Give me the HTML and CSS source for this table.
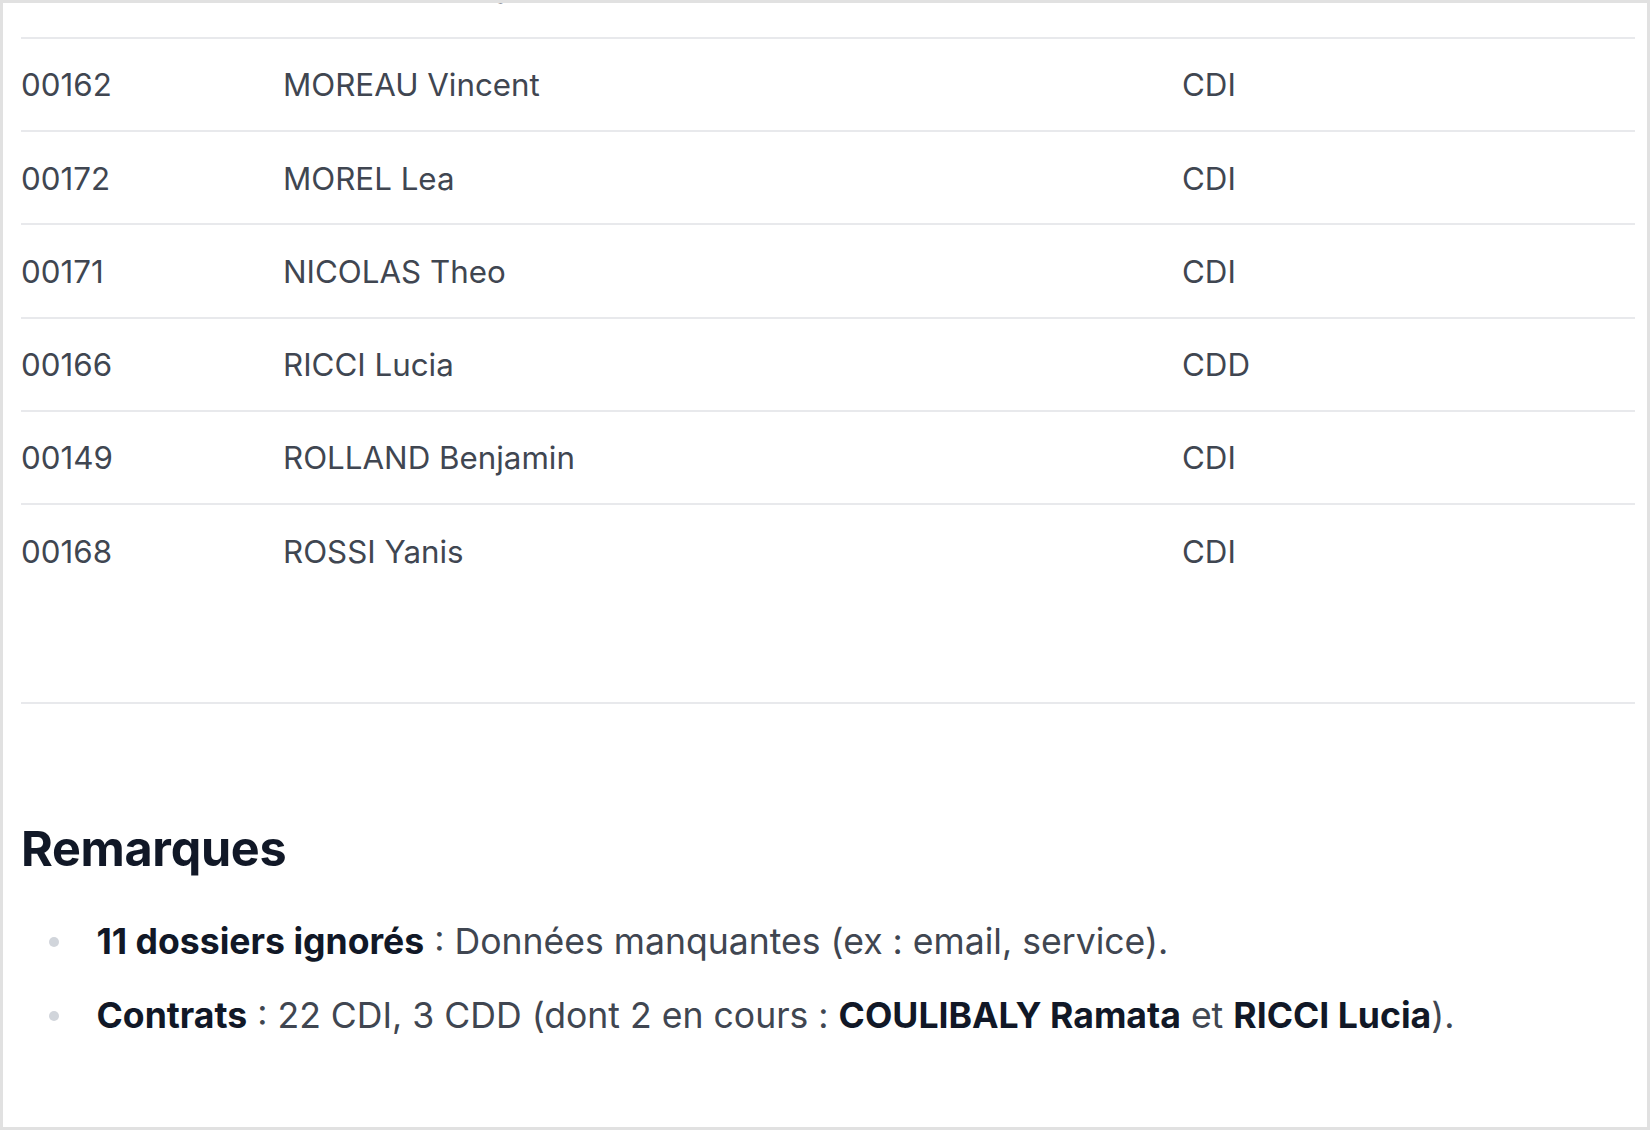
FILE: index.html
```html
<!DOCTYPE html>
<html lang="fr">
<head>
<meta charset="utf-8">
<title>Employés</title>
<link rel="stylesheet" href="styles.css">
</head>
<body>
<div class="frame">
  <div class="content">
    <div class="table-wrap">
      <table class="staff">
        <colgroup>
          <col class="c-id">
          <col class="c-name">
          <col class="c-type">
        </colgroup>
        <tbody>
          <tr><td>00158</td><td>MERCIER Alexandre</td><td>CDI</td></tr>
          <tr><td>00162</td><td>MOREAU Vincent</td><td>CDI</td></tr>
          <tr><td>00172</td><td>MOREL Lea</td><td>CDI</td></tr>
          <tr><td>00171</td><td>NICOLAS Theo</td><td>CDI</td></tr>
          <tr><td>00166</td><td>RICCI Lucia</td><td>CDD</td></tr>
          <tr><td>00149</td><td>ROLLAND Benjamin</td><td>CDI</td></tr>
          <tr><td>00168</td><td>ROSSI Yanis</td><td>CDI</td></tr>
        </tbody>
      </table>
    </div>

    <h3 class="section-title">Remarques</h3>
    <ul class="notes">
      <li><span><strong>11 dossiers ignorés</strong> : Données manquantes (ex : email, service).</span></li>
      <li><span><strong>Contrats</strong> : 22 CDI, 3 CDD (dont 2 en cours : <strong>COULIBALY Ramata</strong> et <strong>RICCI Lucia</strong>).</span></li>
    </ul>
  </div>
</div>
</body>
</html>
```

FILE: styles.css
```css
html, body {
  margin: 0;
  padding: 0;
  background: #ffffff;
}

body {
  font-family: "Inter", "Noto Sans", "Liberation Sans", sans-serif;
  color: #404651;
}

.frame {
  box-sizing: border-box;
  width: 1650px;
  height: 1130px;
  border: 3px solid #e1e1e1;
  overflow: hidden;
  background: #ffffff;
}

.content {
  padding: 0 12px 0 18px;
}

.table-wrap {
  margin-top: -58.5px;
  padding-bottom: 105px;
  border-bottom: 2px solid #e8e9ec;
}

.staff {
  width: 100%;
  table-layout: fixed;
  border-collapse: collapse;
  font-size: 31.3px;
  color: #404651;
}

.c-id { width: 262px; }
.c-name { width: 899px; }
.c-type { width: auto; }

.staff tr {
  border-bottom: 2px solid #e8e9ec;
}

.staff tr:last-child {
  border-bottom: 0;
}

.staff td {
  height: 93.25px;
  padding: 2px 0 0 0;
  box-sizing: border-box;
  vertical-align: middle;
  line-height: 38px;
  white-space: nowrap;
}

.section-title {
  margin: 116px 0 0 0;
  font-size: 48.5px;
  line-height: 58px;
  font-weight: 700;
  color: #111827;
  letter-spacing: -0.3px;
}

.notes {
  list-style: none;
  margin: 37.5px 0 0 0;
  padding: 0;
  font-size: 35.6px;
  line-height: 52px;
  color: #404651;
}

.notes li {
  display: flex;
  align-items: center;
  margin: 0 0 22.7px 0;
}

.notes li::before {
  content: "";
  flex: none;
  width: 10px;
  height: 10px;
  border-radius: 50%;
  background: #d1d5db;
  margin: 0 38px 0 27.5px;
}

.notes strong {
  font-weight: 700;
  color: #111827;
}
```
